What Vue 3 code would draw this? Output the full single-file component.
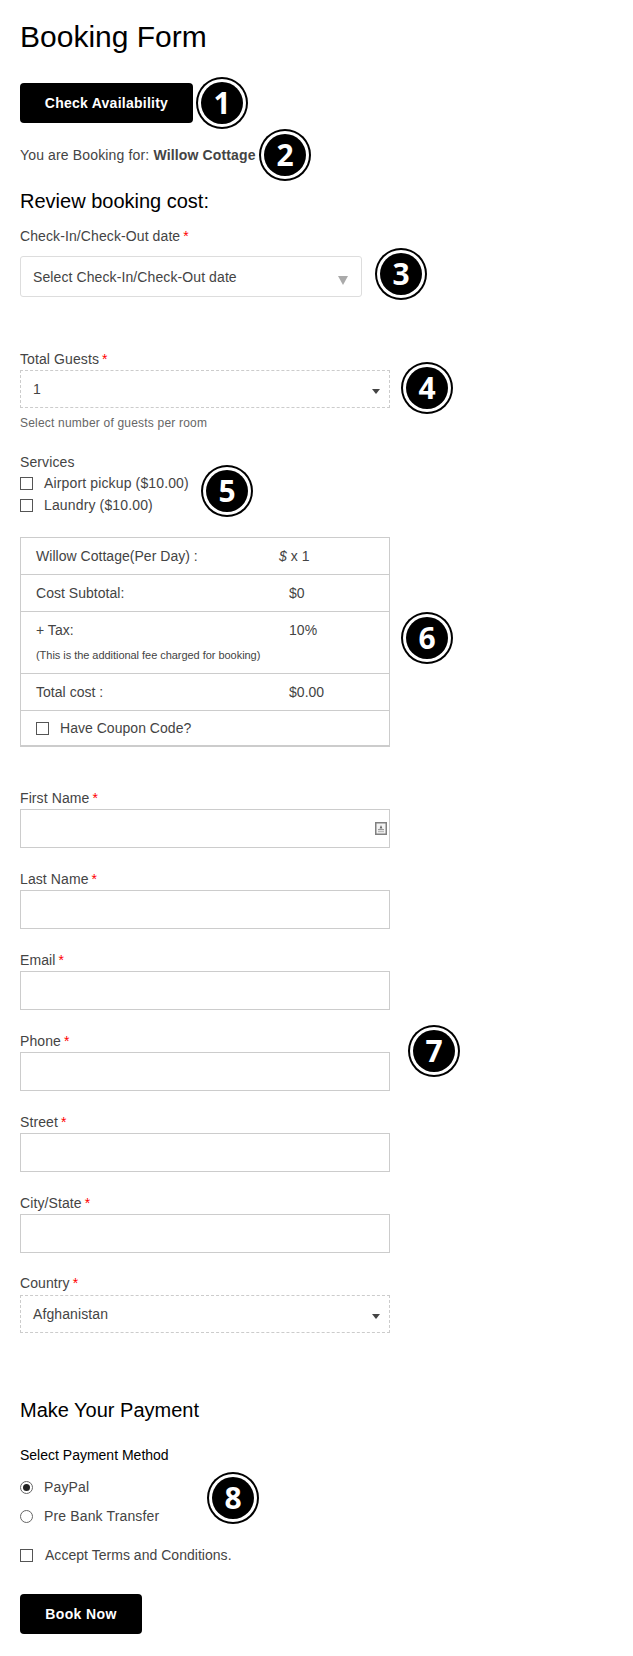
<template>
  <div class="page">
    <div class="form">
      <h1 class="title">Booking Form</h1>

      <div class="check-row">
        <button class="black-btn check-btn">Check Availability</button>
        <span class="badge badge-1">1</span>
      </div>

      <p class="booking-for">
        You are Booking for: <b>Willow Cottage</b>
        <span class="badge badge-2">2</span>
      </p>

      <h3 class="review">Review booking cost:</h3>

      <label class="label">Check-In/Check-Out date<i>*</i></label>
      <div class="date-box">
        <span>Select Check-In/Check-Out date</span>
        <em class="date-arrow"></em>
        <span class="badge badge-3">3</span>
      </div>

      <label class="label guests-label">Total Guests<i>*</i></label>
      <div class="select-box">
        <span>1</span>
        <em class="caret"></em>
        <span class="badge badge-4">4</span>
      </div>
      <p class="help">Select number of guests per room</p>

      <div class="services">
        <div class="services-title">Services</div>
        <label class="check"><span class="box"></span>Airport pickup ($10.00)</label>
        <label class="check"><span class="box"></span>Laundry ($10.00)</label>
        <span class="badge badge-5">5</span>
      </div>

      <div class="cost-table">
        <div class="cost-row">
          <span class="cost-name">Willow Cottage(Per Day) :</span>
          <span class="cost-val per-day"><i>$</i> x 1</span>
        </div>
        <div class="cost-row">
          <span class="cost-name">Cost Subtotal:</span>
          <span class="cost-val">$0</span>
        </div>
        <div class="cost-row tax-row">
          <div class="tax-top">
            <span class="cost-name">+ Tax:</span>
            <span class="cost-val">10%</span>
          </div>
          <small>(This is the additional fee charged for booking)</small>
        </div>
        <div class="cost-row">
          <span class="cost-name">Total cost :</span>
          <span class="cost-val">$0.00</span>
        </div>
        <div class="cost-row coupon-row">
          <label class="check"><span class="box"></span>Have Coupon Code?</label>
        </div>
        <span class="badge badge-6">6</span>
      </div>

      <div class="fields">
        <div v-for="f in fields" :key="f" class="field">
          <label class="label">{{ f }}<i>*</i></label>
          <div class="input">
            <svg v-if="f === 'First Name'" class="contact-icon" viewBox="0 0 12 13">
              <rect x="0.75" y="0.75" width="10.5" height="11.5" fill="#f4f4f4" stroke="#808080" stroke-width="1.5" />
              <path d="M6 3 L7.4 6.4 H4.6 Z" fill="#666" />
              <rect x="3" y="7" width="6" height="1.2" fill="#999" />
              <rect x="3" y="9" width="6" height="1.2" fill="#bbb" />
            </svg>
          </div>
        </div>
        <span class="badge badge-7">7</span>
      </div>

      <label class="label country-label">Country<i>*</i></label>
      <div class="select-box">
        <span>Afghanistan</span>
        <em class="caret"></em>
      </div>

      <h3 class="payment-title">Make Your Payment</h3>
      <div class="method-title">Select Payment Method</div>

      <div class="methods">
        <label class="check radio-row"><span class="radio on"></span>PayPal</label>
        <label class="check radio-row"><span class="radio"></span>Pre Bank Transfer</label>
        <span class="badge badge-8">8</span>
      </div>

      <label class="check terms"><span class="box"></span>Accept Terms and Conditions.</label>

      <button class="black-btn book-btn">Book Now</button>
    </div>
  </div>
</template>

<script setup>
const fields = ["First Name", "Last Name", "Email", "Phone", "Street", "City/State"];
</script>

<style>
html,
body {
  margin: 0;
  background: #fff;
}
</style>

<style scoped>
.page {
  width: 633px;
  height: 1656px;
  overflow: hidden;
  font-family: "Liberation Sans", Arial, sans-serif;
  font-size: 14px;
  letter-spacing: 0.1px;
  color: #444;
  box-sizing: border-box;
  padding: 0 20px;
}
.form {
  width: 370px;
  position: relative;
}
.title {
  margin: 0;
  padding-top: 20px;
  font-size: 30px;
  line-height: 34px;
  font-weight: 400;
  letter-spacing: 0;
  color: #000;
}
.check-row {
  margin-top: 29px;
  position: relative;
  height: 40px;
}
.black-btn {
  display: block;
  background: #000;
  color: #fff;
  border: none;
  border-radius: 4px;
  font-family: inherit;
  font-size: 14px;
  font-weight: 700;
  height: 40px;
  padding: 0;
}
.check-btn {
  width: 173px;
  letter-spacing: 0.25px;
}
.booking-for {
  margin: 23px 0 0;
  line-height: 18px;
  letter-spacing: 0.15px;
  position: relative;
}
.review {
  margin: 25px 0 0;
  font-size: 20px;
  line-height: 24px;
  font-weight: 400;
  letter-spacing: 0;
  color: #000;
}
.label {
  display: block;
  line-height: 16px;
  color: #444;
}
.label i {
  color: #f00;
  font-style: normal;
  margin-left: 3px;
}
.review + .label {
  margin-top: 15px;
}
.date-box {
  margin-top: 12px;
  width: 342px;
  height: 41px;
  box-sizing: border-box;
  border: 1px solid #ddd;
  border-radius: 3px;
  padding: 0 12px;
  display: flex;
  align-items: center;
  position: relative;
}
.date-arrow {
  position: absolute;
  right: 13px;
  top: 19px;
  border-left: 5px solid transparent;
  border-right: 5px solid transparent;
  border-top: 9px solid #aaa;
}
.guests-label {
  margin-top: 54px;
}
.select-box {
  margin-top: 3px;
  height: 38px;
  box-sizing: border-box;
  border: 1px dashed #ccc;
  padding: 0 12px;
  display: flex;
  align-items: center;
  position: relative;
}
.select-box > span:first-child {
  margin-top: -1px;
}
.caret {
  position: absolute;
  right: 9px;
  top: 18px;
  border-left: 4.5px solid transparent;
  border-right: 4.5px solid transparent;
  border-top: 5px solid #444;
}
.help {
  margin: 8px 0 0;
  font-size: 12px;
  line-height: 14px;
  letter-spacing: 0.2px;
  color: #666;
}
.services {
  margin-top: 24px;
  position: relative;
}
.services-title {
  line-height: 16px;
  margin-bottom: 2px;
}
.check {
  display: flex;
  align-items: center;
  line-height: 22px;
  letter-spacing: 0.14px;
  color: #444;
}
.box {
  width: 13px;
  height: 13px;
  box-sizing: border-box;
  border: 1px solid #555;
  margin-right: 11px;
  flex: none;
}
.cost-table {
  margin-top: 21px;
  box-sizing: border-box;
  border: 1px solid #ccc;
  border-bottom-width: 2px;
  position: relative;
}
.cost-row {
  display: flex;
  align-items: center;
  height: 37px;
  box-sizing: border-box;
  padding-left: 15px;
  border-bottom: 1px solid #ccc;
  letter-spacing: 0.03px;
}
.cost-row:nth-last-child(2) {
  border-bottom: none;
  height: 34px;
}
.coupon-row .check {
  letter-spacing: 0.03px;
}
.cost-name {
  width: 253px;
  flex: none;
}
.cost-val {
  flex: none;
}
.per-day {
  margin-left: -10px;
}
.tax-row {
  display: block;
  height: 62px;
  padding-top: 10px;
}
.tax-top {
  display: flex;
  line-height: 16px;
}
.tax-row small {
  display: block;
  margin-top: 10px;
  font-size: 11px;
  line-height: 14px;
  letter-spacing: -0.04px;
  color: #444;
}
.fields {
  margin-top: 43px;
  position: relative;
}
.field {
  height: 81px;
}
.input {
  margin-top: 3px;
  height: 39px;
  box-sizing: border-box;
  border: 1px solid #ccc;
  position: relative;
}
.contact-icon {
  position: absolute;
  right: 2px;
  top: 12px;
  width: 12px;
  height: 13px;
}
.country-label {
  margin-top: -1px;
}
.country-label + .select-box {
  margin-top: 4px;
}
.payment-title {
  margin: 65px 0 0;
  font-size: 20px;
  line-height: 24px;
  font-weight: 400;
  letter-spacing: 0;
  color: #000;
}
.method-title {
  margin-top: 25px;
  line-height: 16px;
  letter-spacing: 0;
  color: #000;
}
.methods {
  margin-top: 10px;
  position: relative;
}
.radio-row {
  height: 29px;
  line-height: 29px;
}
.radio {
  width: 13px;
  height: 13px;
  box-sizing: border-box;
  border: 1px solid #666;
  border-radius: 50%;
  margin-right: 11px;
  flex: none;
  position: relative;
}
.radio.on::after {
  content: "";
  position: absolute;
  left: 2px;
  top: 2px;
  width: 7px;
  height: 7px;
  background: #222;
  border-radius: 50%;
}
.terms {
  margin-top: 13px;
  letter-spacing: 0.03px;
}
.terms .box {
  margin-right: 12px;
}
.book-btn {
  margin-top: 28px;
  width: 122px;
  letter-spacing: 0.4px;
}
.badge {
  position: absolute;
  width: 42px;
  height: 42px;
  box-sizing: border-box;
  background: #000;
  border-radius: 50%;
  box-shadow: 0 0 0 3px #fff, 0 0 0 5px #000;
  color: #fff;
  font-family: "Open Sans", "DejaVu Sans", sans-serif;
  font-size: 30px;
  font-weight: 700;
  letter-spacing: 0;
  line-height: 42px;
  text-align: center;
}
.badge-1 { left: 181px; top: -1px; }
.badge-2 { left: 244px; top: -12px; }
.badge-3 { left: 359px; top: -4px; }
.badge-4 { left: 385px; top: -4px; }
.badge-5 { left: 186px; top: 16px; }
.badge-6 { left: 385px; top: 79px; }
.badge-7 { left: 393px; top: 240px; }
.badge-8 { left: 192px; top: 4px; }
</style>
